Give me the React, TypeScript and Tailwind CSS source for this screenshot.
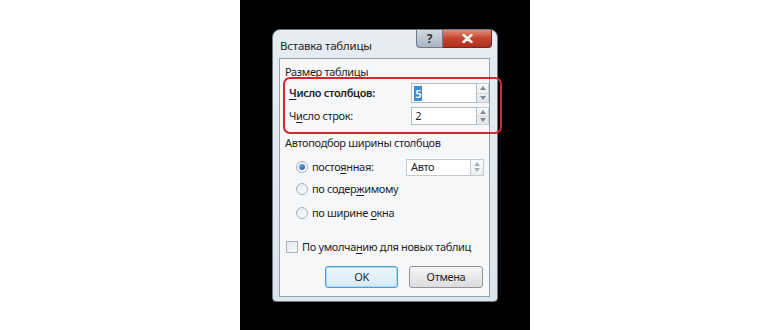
const font = { fontFamily: '"Noto Sans", "Open Sans", sans-serif' }

function Spinner({ h }: { h: number }) {
  return (
    <div className={`flex flex-col w-[12px] border border-l-0 border-[#c9ced4] bg-gradient-to-b from-[#f7f8f9] to-[#e3e6ea] ${h === 20 ? 'h-[20px]' : 'h-[18px]'}`}>
      <div className="flex-1 flex items-center justify-center border-b border-[#d3d7dc]">
        <svg width="6" height="4" viewBox="0 0 6 4"><path d="M0 4 L3 0 L6 4 Z" fill="#7d8a97" /></svg>
      </div>
      <div className="flex-1 flex items-center justify-center">
        <svg width="6" height="4" viewBox="0 0 6 4"><path d="M0 0 L3 4 L6 0 Z" fill="#7d8a97" /></svg>
      </div>
    </div>
  )
}

function Radio({ checked }: { checked?: boolean }) {
  return (
    <div className="w-[12px] h-[12px] shrink-0 rounded-full border border-[#a9b1b9] bg-gradient-to-br from-[#e9ecef] to-[#f9fafb] flex items-center justify-center">
      {checked && <div className="w-[6px] h-[6px] rounded-full bg-gradient-to-br from-[#7ab6ea] to-[#1d5a9e]" />}
    </div>
  )
}

export default function App() {
  return (
    <div className="w-[770px] h-[330px] bg-white flex justify-center text-[#1f1f1f]" style={font}>
      <div className="w-[290px] h-full bg-black pt-[29px] pl-[32px] relative">
        {/* dialog window */}
        <div className="w-[226px] h-[273px] rounded-t-[8px] rounded-b-[4px] bg-gradient-to-b from-[#e6ecf2] to-[#dbe3eb] border border-[#6c7782] flex flex-col">
          {/* title bar */}
          <div className="h-[28px] flex items-start justify-between pl-[7px] pr-[5px]">
            <span className="text-[11.5px] tracking-[-0.2px] leading-none mt-[10px] whitespace-nowrap">Вставка таблицы</span>
            <div className="flex">
              <div className="w-[27px] h-[18px] rounded-bl-[4px] border border-t-0 border-[#6f7c88] bg-gradient-to-b from-[#d2dae2] to-[#a9b5c1] flex items-center justify-center text-[12px] font-bold text-[#333] leading-none">
                ?
              </div>
              <div className="w-[49px] h-[18px] rounded-br-[4px] border border-t-0 border-l-0 border-[#6d2a22] bg-gradient-to-b from-[#e08a78] via-[#c4432f] to-[#b12d1c] flex items-center justify-center">
                <svg width="11" height="9" viewBox="0 0 11 9">
                  <path d="M1.5 1 L9.5 8 M9.5 1 L1.5 8" stroke="#fff" strokeWidth="2.4" strokeLinecap="round" />
                </svg>
              </div>
            </div>
          </div>

          {/* client area */}
          <div className="ml-[6px] mr-[7px] h-[239px] bg-[#f6f7f8] border border-[#97a2ad] flex flex-col text-[11px] tracking-[-0.35px] leading-[16px] whitespace-nowrap">
            <div className="pl-[5px] mt-[5px]">Размер таблицы</div>

            <div className="flex items-center mt-[3px] pl-[9px]">
              <span className="w-[126px] font-semibold"><u className="underline-offset-2">Ч</u>исло столбцов:</span>
              <div className="w-[68px] h-[20px] bg-white border border-[#b5bcc4] flex items-center pl-[2px]">
                <span className="bg-[#3c8ad8] text-white px-[1px] leading-[15px] font-semibold">5</span>
              </div>
              <Spinner h={20} />
            </div>

            <div className="flex items-center mt-[4px] pl-[9px]">
              <span className="w-[126px]">Ч<u className="underline-offset-2">и</u>сло строк:</span>
              <div className="w-[68px] h-[18px] bg-white border border-[#b5bcc4] flex items-center pl-[3px]">2</div>
              <Spinner h={18} />
            </div>

            <div className="pl-[5px] mt-[10px]">Автоподбор ширины столбцов</div>

            <div className="flex items-center mt-[7px] pl-[16px] h-[18px]">
              <Radio checked />
              <span className="ml-[4px] w-[94px]">посто<u className="underline-offset-2">я</u>нная:</span>
              <div className="w-[65px] h-[17px] bg-white border border-[#c3c9cf] flex items-center pl-[4px]">Авто</div>
              <div className="w-[13px] h-[17px] border border-l-0 border-[#c3c9cf] bg-gradient-to-b from-[#f9fafb] to-[#eceef1] flex flex-col items-center justify-center gap-[2px]">
                <svg width="6" height="4" viewBox="0 0 6 4"><path d="M0 4 L3 0 L6 4 Z" fill="#a7b1bb" /></svg>
                <svg width="6" height="4" viewBox="0 0 6 4"><path d="M0 0 L3 4 L6 0 Z" fill="#a7b1bb" /></svg>
              </div>
            </div>

            <div className="flex items-center mt-[4px] pl-[16px] h-[18px]">
              <Radio />
              <span className="ml-[4px]">по содер<u className="underline-offset-2">ж</u>имому</span>
            </div>

            <div className="flex items-center mt-[6px] pl-[16px] h-[18px]">
              <Radio />
              <span className="ml-[4px]">по ширине <u className="underline-offset-2">о</u>кна</span>
            </div>

            <div className="flex items-center mt-[17px] pl-[6px] h-[16px]">
              <div className="w-[12px] h-[12px] shrink-0 border border-[#a9b1b9] bg-gradient-to-br from-[#e6e9ec] to-[#fafbfc]" />
              <span className="ml-[4px]">По умолча<u className="underline-offset-2">н</u>ию для новых таблиц</span>
            </div>

            <div className="flex mt-[11px] pl-[45px] gap-[11px]">
              <div className="w-[73px] h-[22px] rounded-[3px] border border-[#4c9fd6] bg-gradient-to-b from-[#eef7fc] to-[#d6e9f5] shadow-[inset_0_0_0_1px_#a9daf5] flex items-center justify-center">
                OK
              </div>
              <div className="w-[74px] h-[22px] rounded-[3px] border border-[#8e959c] bg-gradient-to-b from-[#f6f6f6] to-[#dcdcdc] flex items-center justify-center">
                Отмена
              </div>
            </div>
          </div>
        </div>

        {/* red highlight annotation */}
        <div className="absolute left-[43px] top-[77px] w-[219px] h-[57px] rounded-[7px] border-2 border-[#d4262f]" />
      </div>
    </div>
  )
}
